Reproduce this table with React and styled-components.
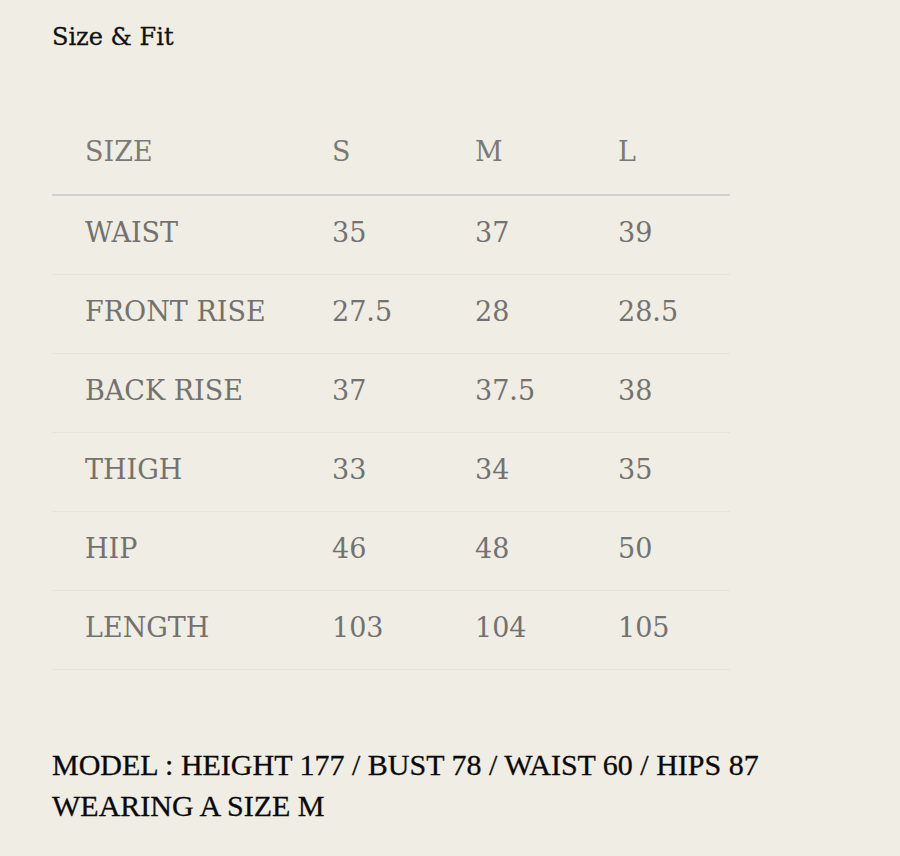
import React from 'react';
import styled, { createGlobalStyle } from 'styled-components';

const GlobalStyle = createGlobalStyle`
  html, body {
    margin: 0;
    padding: 0;
    background: #f0ede4;
  }
`;

const sizes = ['S', 'M', 'L'];

const rows = [
  { label: 'WAIST', values: ['35', '37', '39'] },
  { label: 'FRONT RISE', values: ['27.5', '28', '28.5'] },
  { label: 'BACK RISE', values: ['37', '37.5', '38'] },
  { label: 'THIGH', values: ['33', '34', '35'] },
  { label: 'HIP', values: ['46', '48', '50'] },
  { label: 'LENGTH', values: ['103', '104', '105'] },
];

const App = () => (
  <Page>
    <GlobalStyle />
    <Title>Size &amp; Fit</Title>

    <Table>
      <colgroup>
        <col style={{ width: 247 }} />
        <col style={{ width: 143 }} />
        <col style={{ width: 143 }} />
        <col />
      </colgroup>
      <thead>
        <tr>
          <HeadCell>SIZE</HeadCell>
          {sizes.map((s) => (
            <HeadCell key={s}>{s}</HeadCell>
          ))}
        </tr>
      </thead>
      <tbody>
        {rows.map((row) => (
          <tr key={row.label}>
            <Cell>{row.label}</Cell>
            {row.values.map((v, i) => (
              <Cell key={i}>{v}</Cell>
            ))}
          </tr>
        ))}
      </tbody>
    </Table>

    <ModelNote>
      MODEL : HEIGHT 177 / BUST 78 / WAIST 60 / HIPS 87
      <br />
      WEARING A SIZE M
    </ModelNote>
  </Page>
);

const Page = styled.div`
  min-height: 856px;
  box-sizing: border-box;
  padding: 22px 52px 0;
  background: #f0ede4;
  font-family: "DejaVu Serif", serif;
`;

const Title = styled.h2`
  margin: 0;
  font-size: 24px;
  font-weight: 400;
  line-height: 30px;
  color: #111;
  -webkit-text-stroke: 0.3px #111;
`;

const Table = styled.table`
  width: 678px;
  margin-top: 60px;
  border-collapse: collapse;
  table-layout: fixed;
`;

const HeadCell = styled.th`
  height: 83px;
  padding: 0 0 4px 33px;
  box-sizing: border-box;
  text-align: left;
  font-weight: 400;
  font-size: 27px;
  color: #7b7a77;
  border-bottom: 2px solid #d2d0cb;
`;

const Cell = styled.td`
  height: 79px;
  padding: 0 0 5px 33px;
  box-sizing: border-box;
  text-align: left;
  font-size: 27px;
  color: #737270;
  border-bottom: 1px solid #e6e3da;
`;

const ModelNote = styled.p`
  margin: 74px 0 0;
  font-family: "Liberation Serif", serif;
  font-size: 30px;
  line-height: 41px;
  color: #0a0a0a;
  -webkit-text-stroke: 0.3px #0a0a0a;
`;

export default App;
